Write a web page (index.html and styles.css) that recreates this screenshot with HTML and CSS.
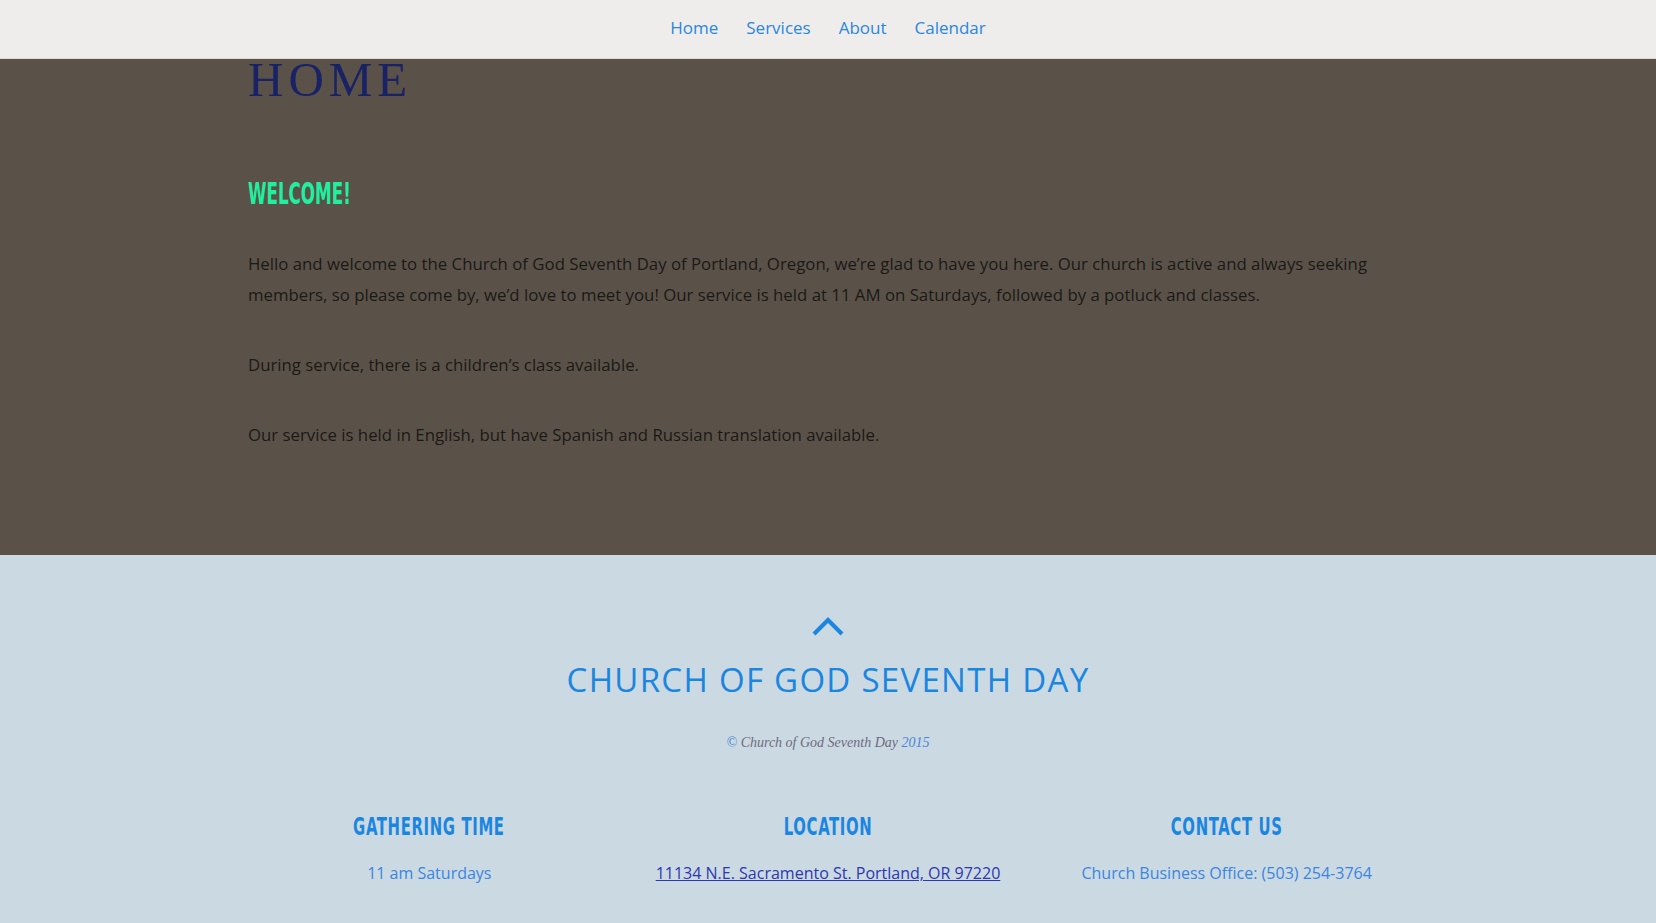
FILE: index.html
```html
<!DOCTYPE html>
<html lang="en">
<head>
<meta charset="utf-8">
<title>Home - Church of God Seventh Day</title>
<link rel="stylesheet" href="styles.css">
</head>
<body>
<header class="topbar">
  <nav class="nav">
    <a href="#" class="nav-link">Home</a>
    <a href="#" class="nav-link">Services</a>
    <a href="#" class="nav-link">About</a>
    <a href="#" class="nav-link">Calendar</a>
  </nav>
</header>
<main class="main">
  <div class="container content">
    <h1 class="page-title">HOME</h1>
    <h2 class="welcome"><span class="condensed">WELCOME!</span></h2>
    <p class="para">Hello and welcome to the Church of God Seventh Day of Portland, Oregon, we’re glad to have you here. Our church is active and always seeking members, so please come by, we’d love to meet you! Our service is held at 11 AM on Saturdays, followed by a potluck and classes.</p>
    <p class="para">During service, there is a children’s class available.</p>
    <p class="para">Our service is held in English, but have Spanish and Russian translation available.</p>
  </div>
</main>
<footer class="footer">
  <a href="#" class="to-top" aria-label="Back to top">
    <svg width="34" height="22" viewBox="0 0 34 22"><path d="M3 19 L17 5 L31 19" fill="none" stroke="#1a86e0" stroke-width="4.2" stroke-linecap="butt" stroke-linejoin="miter"/></svg>
  </a>
  <div class="site-name">CHURCH OF GOD SEVENTH DAY</div>
  <div class="copyright"><span class="blue">©</span> Church of God Seventh Day <span class="blue">2015</span></div>
  <div class="container columns">
    <div class="col">
      <h3 class="col-title"><span class="condensed sm">GATHERING TIME</span></h3>
      <p class="col-text">11 am Saturdays</p>
    </div>
    <div class="col">
      <h3 class="col-title"><span class="condensed sm">LOCATION</span></h3>
      <p class="col-text"><a href="#" class="addr">11134 N.E. Sacramento St. Portland, OR 97220</a></p>
    </div>
    <div class="col">
      <h3 class="col-title"><span class="condensed sm">CONTACT US</span></h3>
      <p class="col-text">Church Business Office: (503) 254-3764</p>
    </div>
  </div>
</footer>
</body>
</html>
```

FILE: styles.css
```css
* { box-sizing: border-box; }
html, body { margin: 0; padding: 0; }
body {
  font-family: "Open Sans", "Noto Sans", sans-serif;
  font-size: 16px;
  background: #cbd9e2;
}
.container {
  width: 1196px;
  margin: 0 auto;
}
.topbar {
  height: 59px;
  background: #efedeb;
  border-bottom: 1px solid #dddbd8;
  display: flex;
  justify-content: center;
  align-items: center;
  padding-bottom: 3px;
}
.nav {
  display: flex;
  gap: 28px;
}
.nav-link {
  color: #2a86e0;
  text-decoration: none;
  font-size: 17px;
}
.main {
  background: #5a5248;
  padding-bottom: 105px;
}
.content {
  padding: 0 18px;
}
.page-title {
  margin: 0;
  padding-top: 2px;
  font-family: "Liberation Serif", "Times New Roman", serif;
  font-weight: normal;
  font-size: 49px;
  line-height: 38px;
  letter-spacing: 5px;
  color: #1a2266;
}
.welcome {
  margin: 79px 0 0;
  line-height: 30px;
  height: 30px;
}
.condensed {
  display: inline-block;
  font-family: "Liberation Sans Narrow", "DejaVu Sans Condensed", sans-serif;
  font-weight: bold;
  font-size: 31px;
  color: #1ff0a0;
  transform: scaleX(0.6);
  transform-origin: left center;
  white-space: nowrap;
}
.para {
  margin: 39px 0 0;
  color: #1b1916;
  font-size: 16.8px;
  line-height: 31px;
}
.welcome + .para { margin-top: 40px; }
.footer {
  padding-top: 60px;
  text-align: center;
  height: 368px;
}
.to-top {
  display: inline-block;
  width: 34px;
  height: 22px;
}
.to-top svg { display: block; }
.site-name {
  margin-top: 16px;
  font-size: 33px;
  letter-spacing: 1.3px;
  color: #1a86e0;
  line-height: 44px;
}
.copyright {
  margin-top: 33px;
  font-family: "Liberation Serif", "Times New Roman", serif;
  font-style: italic;
  font-size: 14px;
  color: #6b6c80;
}
.blue { color: #4a86d8; }
.columns {
  margin-top: 61px;
  display: grid;
  grid-template-columns: 1fr 1fr 1fr;
}
.col-title {
  margin: 0;
  line-height: 30px;
  height: 30px;
}
.condensed.sm {
  font-size: 25px;
  color: #1a86e0;
  transform: scaleX(0.66);
  transform-origin: center center;
  letter-spacing: 1px;
}
.col-text {
  margin: 19px 0 0;
  font-size: 16px;
  color: #3a86e0;
  line-height: 24px;
}
.addr {
  color: #2d37b0;
  text-decoration: underline;
}
```
